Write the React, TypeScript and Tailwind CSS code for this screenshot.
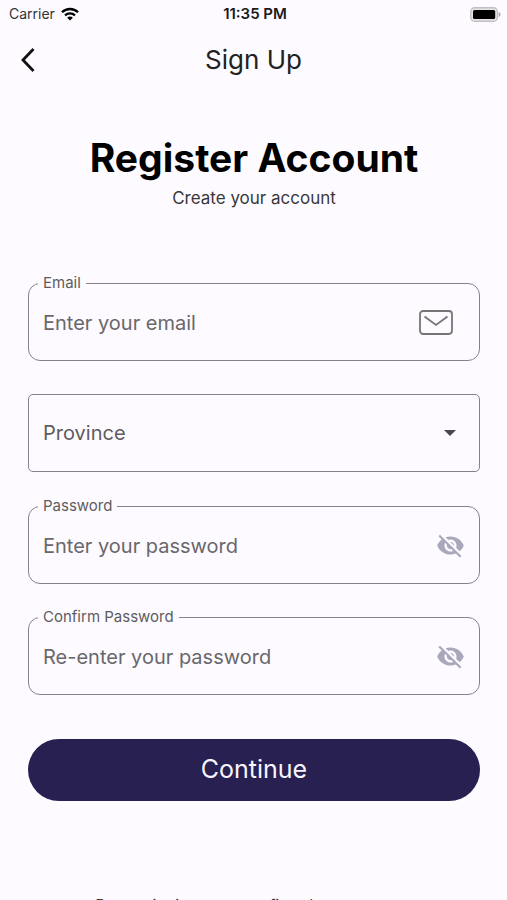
import type { ReactNode } from "react";

function WifiIcon() {
  return (
    <svg viewBox="0 0 18 14" className="h-[14px] w-[18px]" fill="none" aria-hidden="true">
      <path d="M1 5.3C5.4 .9 12.6 .9 17 5.3" stroke="#000" strokeWidth="2.3" />
      <path d="M4 8.4C6.8 5.7 11.2 5.7 14 8.4" stroke="#000" strokeWidth="2.2" />
      <path d="M6.1 10.7C7.7 9.1 10.3 9.1 11.9 10.7L9 13.6Z" fill="#000" />
    </svg>
  );
}

function BatteryIcon() {
  return (
    <svg viewBox="0 0 31 15" className="h-[15px] w-[31px]" aria-hidden="true">
      <rect x=".8" y=".8" width="26.6" height="13.4" rx="3.8" fill="#e6e4e6" stroke="#c2c0c2" strokeWidth="1.4" />
      <rect x="3" y="3" width="22.2" height="9" rx="1.6" fill="#000" />
      <path d="M28.7 5c2.4 1.2 2.4 3.8 0 5Z" fill="#a5a3a5" />
    </svg>
  );
}

function MailIcon() {
  return (
    <svg viewBox="0 0 34 25" className="h-[25px] w-[34px]" fill="none" stroke="#757477" strokeWidth="1.8" aria-hidden="true">
      <rect x="1" y="1" width="32" height="23" rx="3.2" />
      <path d="M5.5 6.5 17 15 28.5 6.5" />
    </svg>
  );
}

function EyeOffIcon() {
  return (
    <svg viewBox="0 0 24 24" className="size-[29px]" fill="#a9a8bb" aria-hidden="true">
      <path d="M12 7c2.76 0 5 2.24 5 5 0 .65-.13 1.26-.36 1.83l2.92 2.92c1.51-1.26 2.7-2.89 3.43-4.75-1.73-4.39-6-7.5-11-7.5-1.4 0-2.74.25-3.98.7l2.16 2.16C10.74 7.13 11.35 7 12 7zM2 4.27l2.28 2.28.46.46C3.08 8.3 1.78 10.02 1 12c1.73 4.39 6 7.5 11 7.5 1.55 0 3.03-.3 4.38-.84l.42.42L19.73 22 21 20.73 3.27 3 2 4.27zM7.53 9.8l1.55 1.55c-.05.21-.08.43-.08.65 0 1.66 1.34 3 3 3 .22 0 .44-.03.65-.08l1.55 1.55c-.67.33-1.41.53-2.2.53-2.76 0-5-2.24-5-5 0-.79.2-1.53.53-2.2zm4.31-.78l3.15 3.15.02-.16c0-1.66-1.34-3-3-3l-.17.01z" />
    </svg>
  );
}

type FieldProps = {
  id: string;
  label: string;
  placeholder: string;
  type: string;
  children: ReactNode;
};

function Field({ id, label, placeholder, type, children }: FieldProps) {
  return (
    <fieldset className="min-w-0 rounded-xl border border-[#858388] px-[9px]">
      <legend className="px-[5px] text-[15px] leading-5 text-[#5e5c60]">
        <label htmlFor={id}>{label}</label>
      </legend>
      <div className="flex h-[67px] items-center pb-2">
        <input
          id={id}
          type={type}
          placeholder={placeholder}
          className="min-w-0 flex-1 bg-transparent px-[5px] text-xl text-[#5e5c60] outline-none placeholder:text-[#69676b]"
        />
        {children}
      </div>
    </fieldset>
  );
}

function PasswordToggle({ label }: { label: string }) {
  return (
    <button type="button" aria-label={label} className="mr-[5px]">
      <EyeOffIcon />
    </button>
  );
}

export default function App() {
  return (
    <div className="h-screen overflow-hidden bg-[#fdfbff] font-['Inter','Liberation_Sans',sans-serif] text-black">
      <div className="grid h-7 grid-cols-3 items-center pr-[6px] pl-[9px] text-sm">
        <div className="flex items-center gap-[6px] text-[#333]">
          <span>Carrier</span>
          <WifiIcon />
        </div>
        <span className="text-center text-[15px] font-semibold text-[#1a1a1a]">11:35 PM</span>
        <div className="flex justify-end">
          <BatteryIcon />
        </div>
      </div>

      <header className="grid h-16 grid-cols-[40px_1fr_40px] items-center px-2">
        <button type="button" aria-label="Back" className="flex h-10 items-center justify-center">
          <svg viewBox="0 0 14 24" className="h-6 w-[14px]" fill="none" stroke="#111" strokeWidth="2.8" aria-hidden="true">
            <path d="M12.5 1 2 12 12.5 23" />
          </svg>
        </button>
        <h1 className="text-center text-[26px] leading-8 text-[#222]">Sign Up</h1>
      </header>

      <main className="pr-[27px] pl-7">
        <div className="pt-10 text-center">
          <h2 className="text-[39px] leading-[52px] font-bold">Register Account</h2>
          <p className="text-[17px] leading-7 text-[#39373b]">Create your account</p>
        </div>

        <form className="flex flex-col pt-[61px]" onSubmit={(event) => event.preventDefault()}>
          <Field id="email" label="Email" placeholder="Enter your email" type="email">
            <span className="mr-[17px]">
              <MailIcon />
            </span>
          </Field>

          <div className="relative mt-[33px] mb-6">
            <select
              aria-label="Province"
              defaultValue=""
              className="h-[78px] w-full appearance-none rounded-[5px] border border-[#858388] bg-transparent px-[14px] text-xl text-[#5e5c60] outline-none"
            >
              <option value="">Province</option>
            </select>
            <svg viewBox="0 0 12 6" className="pointer-events-none absolute top-9 right-6 h-[6px] w-3" fill="#4a484c" aria-hidden="true">
              <path d="M0 0h12L6 6Z" />
            </svg>
          </div>

          <div className="flex flex-col gap-[23px]">
            <Field id="password" label="Password" placeholder="Enter your password" type="password">
              <PasswordToggle label="Show password" />
            </Field>
            <Field id="confirm-password" label="Confirm Password" placeholder="Re-enter your password" type="password">
              <PasswordToggle label="Show confirmed password" />
            </Field>
          </div>

          <button type="submit" className="mt-11 h-[62px] rounded-full bg-[#272050] text-[25px] text-[#f7f5ff]">
            Continue
          </button>
        </form>

        <p className="pt-[92px] text-center text-base leading-6 text-[#39373b]">
          By continuing your confirm that you agree
        </p>
      </main>
    </div>
  );
}
